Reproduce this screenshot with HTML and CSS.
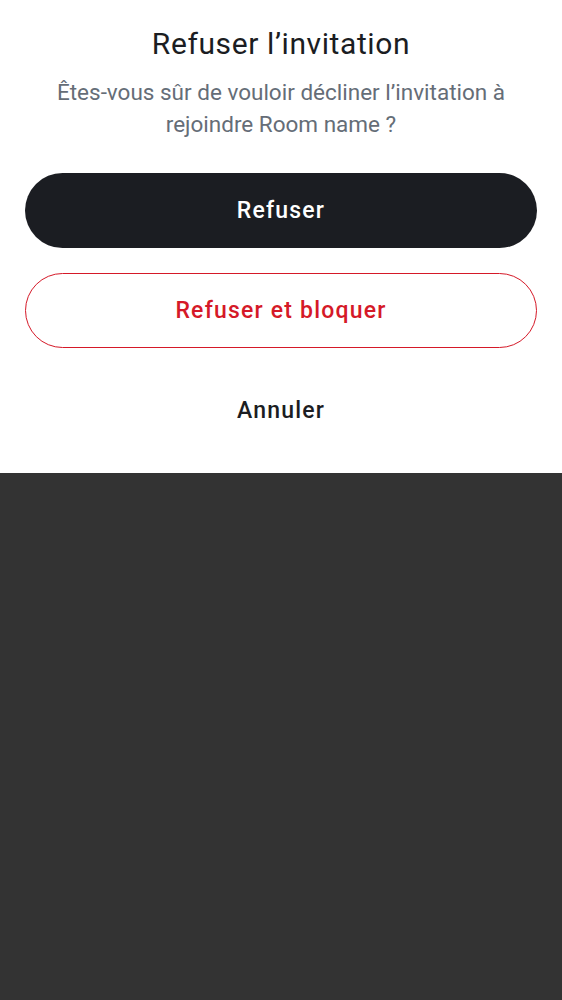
FILE: index.html
```html
<!DOCTYPE html>
<html lang="fr">
<head>
<meta charset="utf-8">
<link rel="stylesheet" href="styles.css">
</head>
<body>
<div class="sheet">
  <h1 class="title">Refuser l’invitation</h1>
  <p class="subtitle">Êtes-vous sûr de vouloir décliner l’invitation à rejoindre Room name ?</p>
  <div class="actions">
    <button class="btn btn-primary">Refuser</button>
    <button class="btn btn-danger">Refuser et bloquer</button>
    <button class="btn btn-text">Annuler</button>
  </div>
</div>
</body>
</html>
```

FILE: styles.css
```css
html, body {
  margin: 0;
  padding: 0;
  height: 100%;
}
body {
  background: #333333;
  font-family: Roboto, "Noto Sans", sans-serif;
}
.sheet {
  background: #ffffff;
  padding: 26px 25px 25px;
}
.title {
  margin: 0;
  font-size: 30px;
  line-height: 36px;
  letter-spacing: 0.6px;
  font-weight: 400;
  color: #1b1d22;
  text-align: center;
}
.subtitle {
  margin: 14px 0 0;
  font-size: 22.5px;
  line-height: 32px;
  color: #656d77;
  text-align: center;
}
.actions {
  margin-top: 33px;
  display: flex;
  flex-direction: column;
  gap: 25px;
}
.btn {
  height: 75px;
  border-radius: 38px;
  font-family: Roboto, "Noto Sans", sans-serif;
  font-size: 23px;
  letter-spacing: 1.2px;
  font-weight: 500;
  border: 1px solid transparent;
  background: transparent;
  padding: 0;
}
.btn-primary {
  background: #1b1d22;
  color: #ffffff;
}
.btn-danger {
  border: 1.5px solid #d51928;
  color: #d51928;
}
.btn-text {
  color: #1b1d22;
}
```
